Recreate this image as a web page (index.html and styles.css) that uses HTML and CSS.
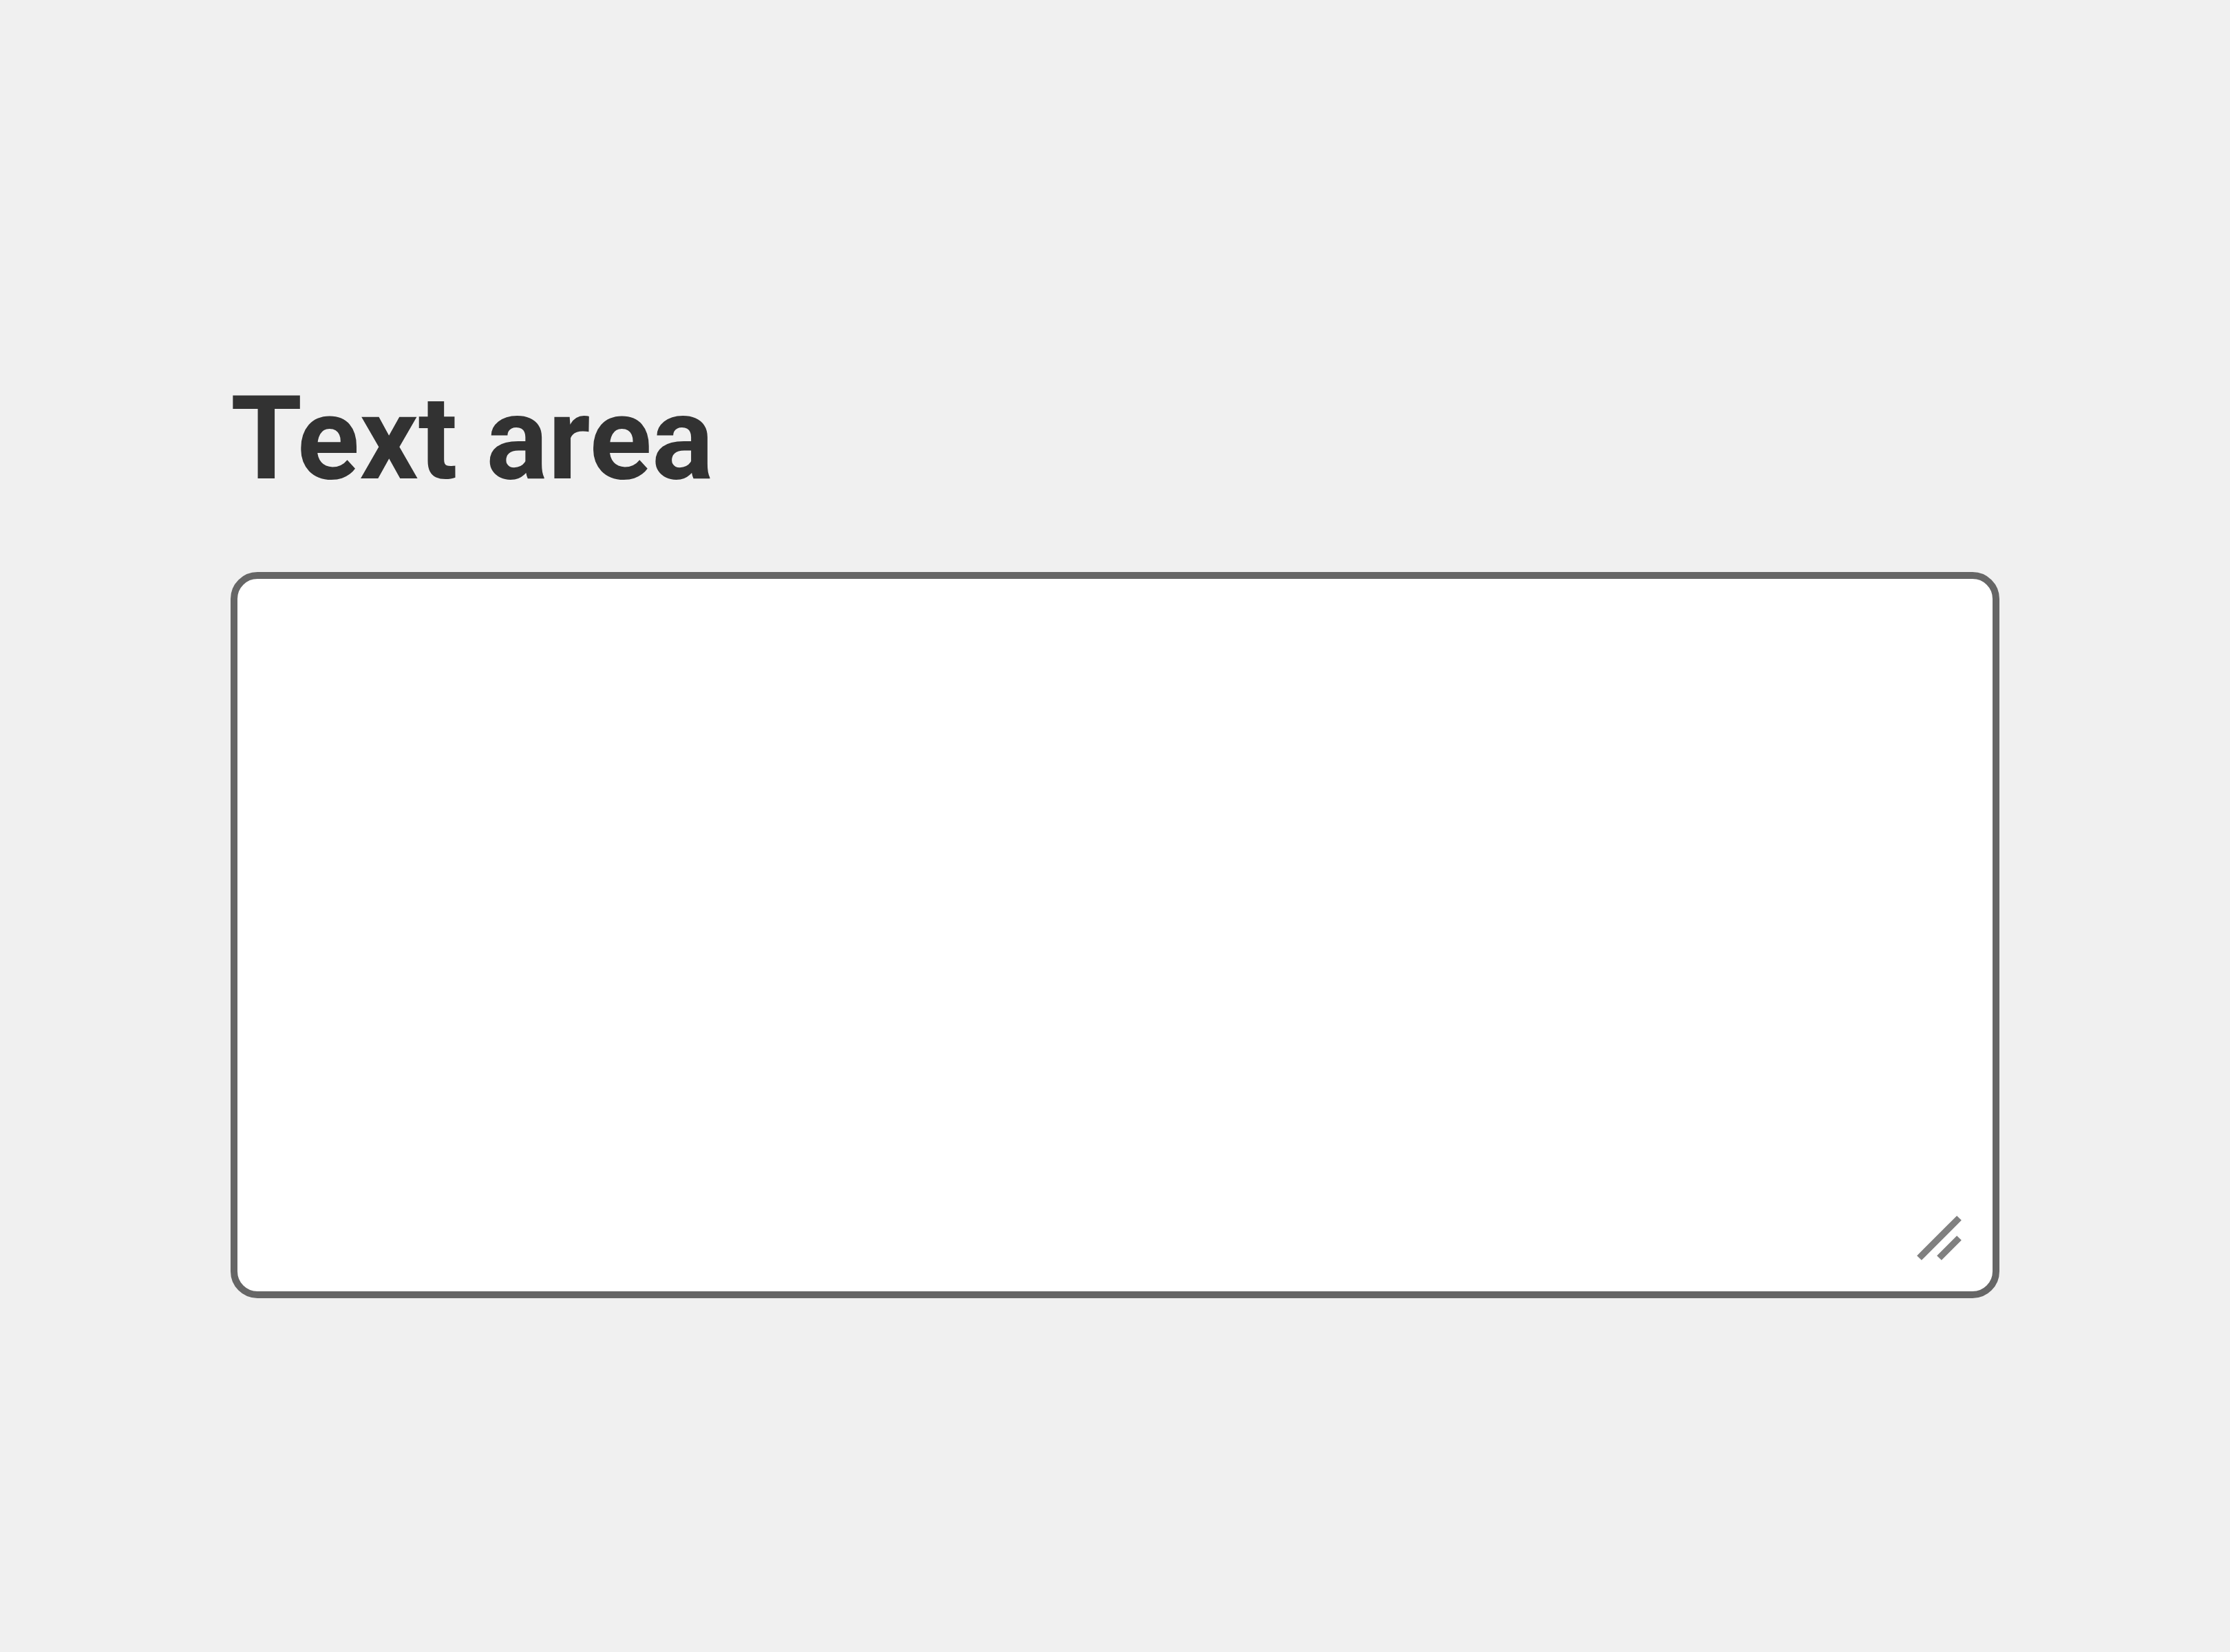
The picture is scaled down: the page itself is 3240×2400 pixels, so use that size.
FILE: index.html
```html
<!DOCTYPE html>
<html lang="en">
<head>
  <meta charset="utf-8">
  <meta name="viewport" content="width=device-width, initial-scale=1">
  <title>Text area</title>
  <link rel="stylesheet" href="styles.css">
</head>
<body>
  <main class="page">
    <div class="field">
      <label class="field-label" for="message">Text area</label>
      <div class="field-control">
        <textarea class="field-input" id="message" name="message"></textarea>
        <svg class="field-grip" viewBox="0 0 65 65" aria-hidden="true">
          <path d="M3.5 61.5L61.5 3.5M32.5 61.5L61.5 32.5"/>
        </svg>
      </div>
    </div>
  </main>
</body>
</html>
```
FILE: styles.css
```css
* {
  box-sizing: border-box;
}

body {
  margin: 0;
  background: #f0f0f0;
  color: #323232;
  font-family: Roboto, "Liberation Sans", sans-serif;
}

.page {
  min-height: 100vh;
  padding: 530px 335px;
}

.field {
  display: flex;
  flex-direction: column;
  align-items: stretch;
  gap: 85px;
}

.field-label {
  align-self: flex-start;
  font-size: 168px;
  font-weight: 700;
  line-height: 216px;
}

.field-control {
  position: relative;
}

.field-input {
  display: block;
  width: 100%;
  height: 1055px;
  padding: 50px;
  border: 10px solid #666;
  border-radius: 39px;
  outline: 0;
  background: #fff;
  color: inherit;
  font: inherit;
  font-size: 168px;
  resize: none;
}

.field-grip {
  position: absolute;
  right: 55px;
  bottom: 55px;
  width: 65px;
  height: 65px;
  fill: none;
  stroke: #808080;
  stroke-width: 9.5;
  pointer-events: none;
}
```
